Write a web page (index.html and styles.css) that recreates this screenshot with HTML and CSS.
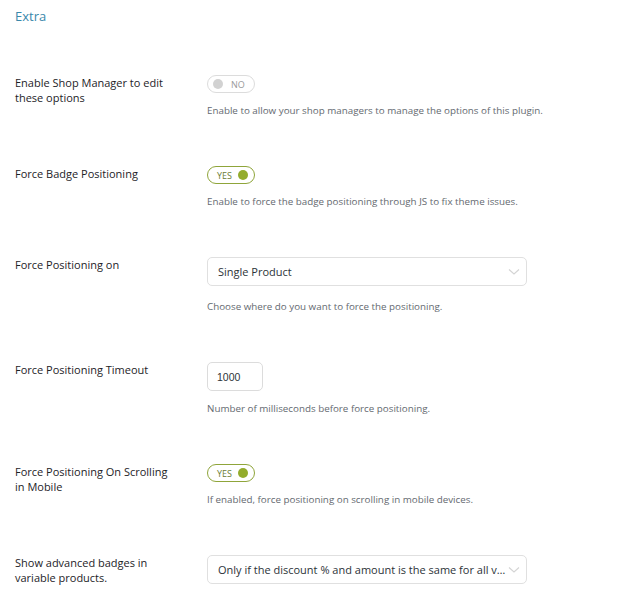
FILE: index.html
```html
<!DOCTYPE html>
<html>
<head>
<meta charset="utf-8">
<link rel="stylesheet" href="styles.css">
</head>
<body>
<div class="page">
  <h2 class="title">Extra</h2>
  <div class="rows">
    <div class="row">
      <div class="label">Enable Shop Manager to edit these options</div>
      <div class="field">
        <div class="toggle off"><span class="knob"></span><span class="tg-text">NO</span></div>
        <div class="desc">Enable to allow your shop managers to manage the options of this plugin.</div>
      </div>
    </div>
    <div class="row">
      <div class="label">Force Badge Positioning</div>
      <div class="field">
        <div class="toggle on"><span class="tg-text">YES</span><span class="knob"></span></div>
        <div class="desc">Enable to force the badge positioning through JS to fix theme issues.</div>
      </div>
    </div>
    <div class="row">
      <div class="label">Force Positioning on</div>
      <div class="field">
        <div class="select"><span class="sel-text">Single Product</span><svg class="chev" width="12" height="8" viewBox="0 0 12 8"><path d="M1 1.5 L6 6 L11 1.5" fill="none" stroke="#d4d4d4" stroke-width="1.1"/></svg></div>
        <div class="desc desc-sel">Choose where do you want to force the positioning.</div>
      </div>
    </div>
    <div class="row">
      <div class="label">Force Positioning Timeout</div>
      <div class="field">
        <div class="input">1000</div>
        <div class="desc">Number of milliseconds before force positioning.</div>
      </div>
    </div>
    <div class="row">
      <div class="label">Force Positioning On Scrolling in Mobile</div>
      <div class="field">
        <div class="toggle on"><span class="tg-text">YES</span><span class="knob"></span></div>
        <div class="desc">If enabled, force positioning on scrolling in mobile devices.</div>
      </div>
    </div>
    <div class="row">
      <div class="label">Show advanced badges in variable products.</div>
      <div class="field">
        <div class="select"><span class="sel-text">Only if the discount % and amount is the same for all variations</span><svg class="chev" width="12" height="8" viewBox="0 0 12 8"><path d="M1 1.5 L6 6 L11 1.5" fill="none" stroke="#d4d4d4" stroke-width="1.1"/></svg></div>
      </div>
    </div>
  </div>
</div>
</body>
</html>
```
FILE: styles.css
```css
html, body {
  margin: 0;
  padding: 0;
  background: #ffffff;
}
body {
  font-family: "Open Sans", "Noto Sans", sans-serif;
  color: #2c3338;
}
.page {
  padding: 8px 15px 0 15px;
}
.title {
  margin: 0;
  font-size: 13px;
  line-height: 16px;
  font-weight: 400;
  color: #3a88ab;
}
.rows {
  margin-top: 27px;
}
.row {
  display: grid;
  grid-template-columns: 192px 320px;
  padding: 24px 0 24px 0;
}
.label {
  font-size: 11px;
  line-height: 15px;
  color: #1d2327;
  max-width: 160px;
}
.field {
  display: flex;
  flex-direction: column;
  align-items: flex-start;
}
.toggle {
  box-sizing: border-box;
  width: 48px;
  height: 18px;
  border-radius: 9px;
  border: 1px solid #dcdcdc;
  display: flex;
  align-items: center;
  padding: 0 5px;
  gap: 8px;
  font-size: 9px;
  line-height: 1;
}
.toggle .knob {
  width: 10px;
  height: 10px;
  border-radius: 50%;
  background: #d2d2d2;
  flex: none;
}
.toggle.off .tg-text {
  color: #9a9a9a;
}
.toggle.on {
  border-color: #8fa53a;
  padding: 0 6px 0 9px;
  gap: 6px;
}
.toggle.on .knob {
  background: #93ac2d;
}
.toggle.on .tg-text {
  color: #6c7c34;
}
.desc {
  margin-top: 11px;
  font-size: 9.8px;
  line-height: 14px;
  color: #646970;
  white-space: nowrap;
}
.desc-sel {
  margin-top: 14px;
}
.select {
  box-sizing: border-box;
  width: 320px;
  height: 29px;
  border: 1px solid #e0e0e0;
  border-radius: 5px;
  display: flex;
  align-items: center;
  padding: 0 6px 0 10px;
  font-size: 11px;
  color: #2c3338;
}
.sel-text {
  flex: 1;
  min-width: 0;
  white-space: nowrap;
  overflow: hidden;
  text-overflow: ellipsis;
}
.chev {
  flex: none;
  margin-left: 1px;
}
.input {
  box-sizing: border-box;
  width: 56px;
  height: 29px;
  border: 1px solid #dcdcdc;
  border-radius: 5px;
  display: flex;
  align-items: center;
  padding: 0 9px;
  font-family: "Liberation Sans", Arial, sans-serif;
  font-size: 10.5px;
  color: #2c3338;
}
```
